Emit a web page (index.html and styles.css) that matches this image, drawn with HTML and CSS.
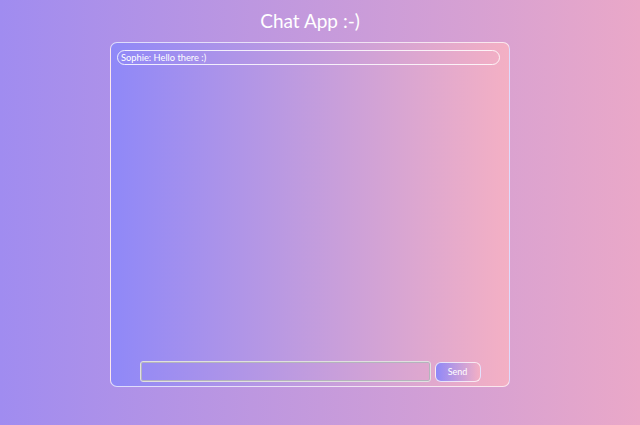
FILE: index.html
```html
<!DOCTYPE html>
<html>
<head>
<meta charset="utf-8">
<link rel="stylesheet" href="styles.css">
</head>
<body>
<div class="page">
  <h1 class="title">Chat App :-)</h1>
  <div class="panel">
    <div class="messages">
      <div class="bubble">Sophie: Hello there :)</div>
    </div>
    <form class="composer">
      <input class="field" type="text">
      <button class="send" type="button">Send</button>
    </form>
  </div>
</div>
</body>
</html>
```
FILE: styles.css
```css
html, body {
  margin: 0;
  height: 100%;
}
body {
  width: 640px;
  height: 425px;
  background: linear-gradient(90deg, #a08cf0 0%, #eaa8c8 100%);
  font-family: "Lato", "Liberation Sans", sans-serif;
  color: #fff;
  overflow: hidden;
}
.page {
  width: 620px;
  display: flex;
  flex-direction: column;
  align-items: center;
}
.title {
  margin: 9px 0 0 0;
  font-size: 19px;
  line-height: 23px;
  font-weight: 400;
  height: 23px;
}
.panel {
  margin-top: 10px;
  box-sizing: border-box;
  width: 400px;
  height: 345px;
  border: 1px solid rgba(255,255,255,0.7);
  border-radius: 7px;
  background: linear-gradient(90deg, #8f88f8 0%, #f4b0c4 100%);
  display: flex;
  flex-direction: column;
  padding: 7px 9px 4px 6px;
}
.messages {
  flex: 1;
}
.bubble {
  box-sizing: border-box;
  height: 15px;
  border: 1px solid rgba(255,255,255,0.85);
  border-radius: 8px;
  font-size: 9.3px;
  line-height: 13px;
  padding-left: 3px;
}
.composer {
  margin: 0;
  display: flex;
  justify-content: center;
  align-items: center;
  gap: 4px;
  padding-left: 3px;
}
.field {
  box-sizing: border-box;
  width: 291px;
  height: 21px;
  margin: 0;
  border: 1px solid #e0e0e0;
  box-shadow: inset 0 0 0 1px #b4b4bc;
  border-radius: 3px;
  background: transparent;
  outline: none;
}
.send {
  box-sizing: border-box;
  width: 46px;
  height: 20px;
  margin: 0;
  border: 1px solid rgba(255,255,255,0.75);
  border-radius: 6px;
  background: linear-gradient(90deg, #8f88f8 0%, #f4b0c4 100%);
  color: #fff;
  font-family: "Lato", "Liberation Sans", sans-serif;
  font-size: 9px;
  padding: 0;
}
```
